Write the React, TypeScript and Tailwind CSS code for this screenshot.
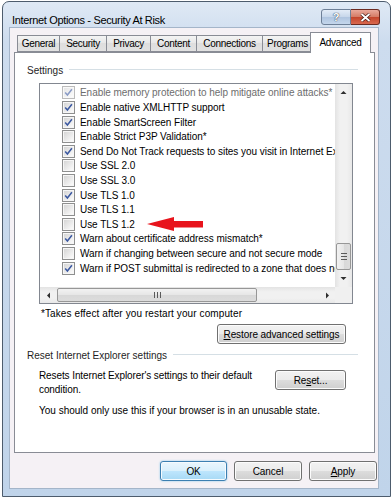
import React from 'react';

const FONT = "font-['Liberation_Sans',Arial,sans-serif]";

const rows: { label: string; checked: boolean; dim?: boolean }[] = [
  { label: 'Enable memory protection to help mitigate online attacks*', checked: true, dim: true },
  { label: 'Enable native XMLHTTP support', checked: true },
  { label: 'Enable SmartScreen Filter', checked: true },
  { label: 'Enable Strict P3P Validation*', checked: false },
  { label: 'Send Do Not Track requests to sites you visit in Internet Explorer*', checked: true },
  { label: 'Use SSL 2.0', checked: false },
  { label: 'Use SSL 3.0', checked: false },
  { label: 'Use TLS 1.0', checked: true },
  { label: 'Use TLS 1.1', checked: false },
  { label: 'Use TLS 1.2', checked: false },
  { label: 'Warn about certificate address mismatch*', checked: true },
  { label: 'Warn if changing between secure and not secure mode', checked: false },
  { label: 'Warn if POST submittal is redirected to a zone that does not permit posts', checked: true },
];

const tabs = [
  { name: 'General', w: 'w-[42px]' },
  { name: 'Security', w: 'w-[47px]' },
  { name: 'Privacy', w: 'w-[44px]' },
  { name: 'Content', w: 'w-[46px]' },
  { name: 'Connections', w: 'w-[66px]' },
  { name: 'Programs', w: 'w-[50px]' },
];

const CheckBox = ({ checked, dim, id }: { checked: boolean; dim?: boolean; id: number }) => (
  <svg width="13" height="13" viewBox="0 0 13 13" className={`shrink-0 ${dim ? 'opacity-60' : ''}`}>
    <defs>
      <linearGradient id={`cb${id}`} x1="0" y1="0" x2="1" y2="1">
        <stop offset="0" stopColor="#d6d6d6" />
        <stop offset="1" stopColor="#fbfbfb" />
      </linearGradient>
    </defs>
    <rect x="0.5" y="0.5" width="12" height="12" fill="#f6f6f6" stroke="#8e8f8f" />
    <rect x="2" y="2" width="9" height="9" fill={`url(#cb${id})`} />
    {checked && (
      <path d="M3.2 6.4 L5.4 9 L9.9 3.2" stroke="#3b58a0" strokeWidth="1.5" fill="none" />
    )}
  </svg>
);

const Tri = ({ dir }: { dir: 'up' | 'down' | 'left' | 'right' }) => {
  const d = {
    up: 'M0.5 4 L3.5 1 L6.5 4 Z',
    down: 'M0.5 1 L3.5 4 L6.5 1 Z',
    left: 'M4 0.5 L1 3.5 L4 6.5 Z',
    right: 'M1 0.5 L4 3.5 L1 6.5 Z',
  }[dir];
  const v = dir === 'up' || dir === 'down';
  return (
    <svg width={v ? 7 : 5} height={v ? 5 : 7} viewBox={v ? '0 0 7 5' : '0 0 5 7'}>
      <path d={d} fill="#2e2e2e" />
    </svg>
  );
};

const Btn = ({ children, className = '', focused = false }: { children: React.ReactNode; className?: string; focused?: boolean }) => (
  <div
    className={`h-[20px] rounded-[3px] border flex items-center justify-center text-[10px] tracking-[-0.1px] text-black ${
      focused
        ? 'border-[#3c7fb1] bg-[linear-gradient(#eaf6fd,#d9f0fc_50%,#bee6fd_50%,#a7d9f5)] shadow-[inset_0_0_0_1px_#f6fbfe,0_0_2px_#7ec4ea]'
        : 'border-[#707070] bg-[linear-gradient(#f2f2f2,#ebebeb_50%,#dddddd_50%,#cfcfcf)] shadow-[inset_0_0_0_1px_#fcfcfc]'
    } ${className}`}
  >
    {children}
  </div>
);

const GroupLabel = ({ text }: { text: string }) => (
  <div className="flex items-center h-[14px] pl-[12px] pr-[16px] gap-[6px]">
    <span className="text-[10px] text-[#1e1e1e] whitespace-nowrap">{text}</span>
    <div className="flex-1 h-[2px] border-t border-[#d5dfe5] border-b-white border-b" />
  </div>
);

const App: React.FC = () => {
  return (
    <div className={`w-[391px] h-[500px] bg-white relative overflow-hidden ${FONT}`}>
      {/* window frame */}
      <div className="ml-[2px] mt-[1px] w-[389px] h-[496px] border border-[#4d5c6d] rounded-t-[7px] flex flex-col pl-[6px] pr-[11px] pb-[7px] bg-[linear-gradient(180deg,#dfe9f5,#cddcee_40px,#c0d4ea)]">
        {/* title bar */}
        <div className="h-[25px] shrink-0 flex items-start pt-[7px]">
          <span className="pl-[3px] pt-[3px] text-[11px] tracking-[-0.35px] text-black whitespace-nowrap">
            Internet Options - Security At Risk
          </span>
          <div className="ml-auto flex mr-[-1px]">
            <div className="w-[30px] h-[16px] rounded-l-[3px] border border-[#6d7f97] bg-[linear-gradient(#e3ecf7,#c6d6ea_50%,#aec4df_50%,#c4d6ec)] flex items-center justify-center text-[11px] font-bold text-white [text-shadow:0_0_1px_#2a3b55,0_0_1px_#2a3b55]">
              ?
            </div>
            <div className="w-[29px] h-[16px] rounded-r-[3px] border border-l-0 border-[#6c2a20] bg-[linear-gradient(#e9a99b,#d47a64_50%,#c2432a_50%,#d9694f)] flex items-center justify-center">
              <svg width="11" height="9" viewBox="0 0 11 9">
                <path d="M1.5 1 L9.5 8 M9.5 1 L1.5 8" stroke="#3a120c" strokeWidth="3.2" />
                <path d="M1.5 1 L9.5 8 M9.5 1 L1.5 8" stroke="#ffffff" strokeWidth="1.9" />
              </svg>
            </div>
          </div>
        </div>

        {/* dialog body */}
        <div className="flex-1 border border-[#a4b5c9] bg-[#f5f1f5] flex flex-col">
          {/* tabs */}
          <div className="mt-[4px] h-[20px] pl-[7px] flex items-end relative z-10">
            {tabs.map((t) => (
              <div
                key={t.name}
                className={`${t.w} h-[17px] border border-[#898c95] border-r-0 bg-[linear-gradient(#f4f4f4,#e7e7e7_50%,#dedede_50%,#e2e2e2)] flex items-center justify-center text-[10px] tracking-[-0.3px] text-black`}
              >
                {t.name}
              </div>
            ))}
            <div className="ml-[-2px] w-[61px] h-[21px] -mb-px border border-[#898c95] border-b-0 bg-white flex items-start justify-center pt-[2px] text-[10px] tracking-[-0.3px] text-black">
              Advanced
            </div>
          </div>

          {/* tab panel */}
          <div className="ml-[4px] mr-[3px] h-[401px] border border-[#898c95] bg-white flex flex-col">
            <div className="mt-[10px]">
              <GroupLabel text="Settings" />
            </div>

            {/* list box */}
            <div className="ml-[24px] mt-[6px] w-[314px] h-[221px] border border-[#828790] bg-white flex flex-col">
              <div className="flex flex-1 min-h-0">
                <div className="flex-1 min-w-0 overflow-hidden pt-[1.7px]">
                  {rows.map((r, i) => (
                    <div key={i} className="h-[14.6px] flex items-center pl-[22px] whitespace-nowrap">
                      <CheckBox checked={r.checked} dim={r.dim} id={i} />
                      <span className={`ml-[5px] text-[10px] tracking-[-0.05px] ${r.dim ? 'text-[#6d6d6d]' : 'text-black'}`}>
                        {r.label}
                      </span>
                    </div>
                  ))}
                </div>
                {/* vertical scrollbar */}
                <div className="w-[17px] flex flex-col bg-[linear-gradient(90deg,#e3e3e3,#f1f1f1_30%,#f1f1f1_70%,#e8e8e8)]">
                  <div className="h-[17px] flex items-center justify-center">
                    <Tri dir="up" />
                  </div>
                  <div className="flex-1 flex flex-col justify-end px-[1px]">
                    <div className="h-[27px] rounded-[2px] border border-[#979797] bg-[linear-gradient(90deg,#f2f2f2,#e6e6e6_50%,#d8d8d8_50%,#dcdcdc)] flex flex-col items-center justify-center gap-[2px]">
                      <div className="w-[6px] h-px bg-[#5a5a5a]" />
                      <div className="w-[6px] h-px bg-[#5a5a5a]" />
                      <div className="w-[6px] h-px bg-[#5a5a5a]" />
                    </div>
                  </div>
                  <div className="h-[17px] flex items-center justify-center">
                    <Tri dir="down" />
                  </div>
                </div>
              </div>
              {/* horizontal scrollbar */}
              <div className="h-[16px] flex shrink-0">
                <div className="flex-1 flex bg-[linear-gradient(#e3e3e3,#f1f1f1_30%,#f1f1f1_70%,#e8e8e8)]">
                  <div className="w-[16px] flex items-center justify-center">
                    <Tri dir="left" />
                  </div>
                  <div className="flex-1 flex items-center py-[1px] pl-[1px] pr-[62px]">
                    <div className="w-[200px] h-full rounded-[2px] border border-[#979797] bg-[linear-gradient(#f2f2f2,#e6e6e6_50%,#d8d8d8_50%,#dcdcdc)] flex items-center justify-center gap-[2px]">
                      <div className="w-px h-[6px] bg-[#5a5a5a]" />
                      <div className="w-px h-[6px] bg-[#5a5a5a]" />
                      <div className="w-px h-[6px] bg-[#5a5a5a]" />
                    </div>
                  </div>
                  <div className="w-[16px] flex items-center justify-center">
                    <Tri dir="right" />
                  </div>
                </div>
                <div className="w-[17px] bg-[#f0f0f0]" />
              </div>
            </div>

            <div className="mt-[3px] pl-[26px] text-[10px] leading-[13px] tracking-[0.1px] text-black">
              *Takes effect after you restart your computer
            </div>

            <div className="mt-[4px] flex justify-end pr-[28px]">
              <Btn className="w-[129px]">
                <span>
                  <span className="underline">R</span>estore advanced settings
                </span>
              </Btn>
            </div>

            <div className="mt-[4px]">
              <GroupLabel text="Reset Internet Explorer settings" />
            </div>

            <div className="mt-[7px] flex pl-[24px] pr-[28px]">
              <div className="flex-1 text-[10px] leading-[14px] tracking-[-0.1px] text-black">
                Resets Internet Explorer's settings to their default
                <br />
                condition.
              </div>
              <Btn className="w-[71px] mt-[1px]">
                <span>
                  Re<span className="underline">s</span>et...
                </span>
              </Btn>
            </div>

            <div className="mt-[7px] pl-[24px] text-[10px] leading-[14px] text-black">
              You should only use this if your browser is in an unusable state.
            </div>
          </div>

          {/* bottom buttons */}
          <div className="mt-[8px] flex justify-end gap-[7px] pr-[1px]">
            <Btn focused className="w-[67px]">OK</Btn>
            <Btn className="w-[68px]">Cancel</Btn>
            <Btn className="w-[68px]">
              <span>
                <span className="underline">A</span>pply
              </span>
            </Btn>
          </div>
        </div>
      </div>

      {/* red annotation arrow */}
      <svg className="absolute left-[145px] top-[215px]" width="60" height="18" viewBox="0 0 60 18">
        <path d="M2 9 L29 2 L29 6 L58 6 L58 12.5 L29 12.5 L29 16 Z" fill="#e8141c" />
      </svg>
    </div>
  );
};

export default App;
